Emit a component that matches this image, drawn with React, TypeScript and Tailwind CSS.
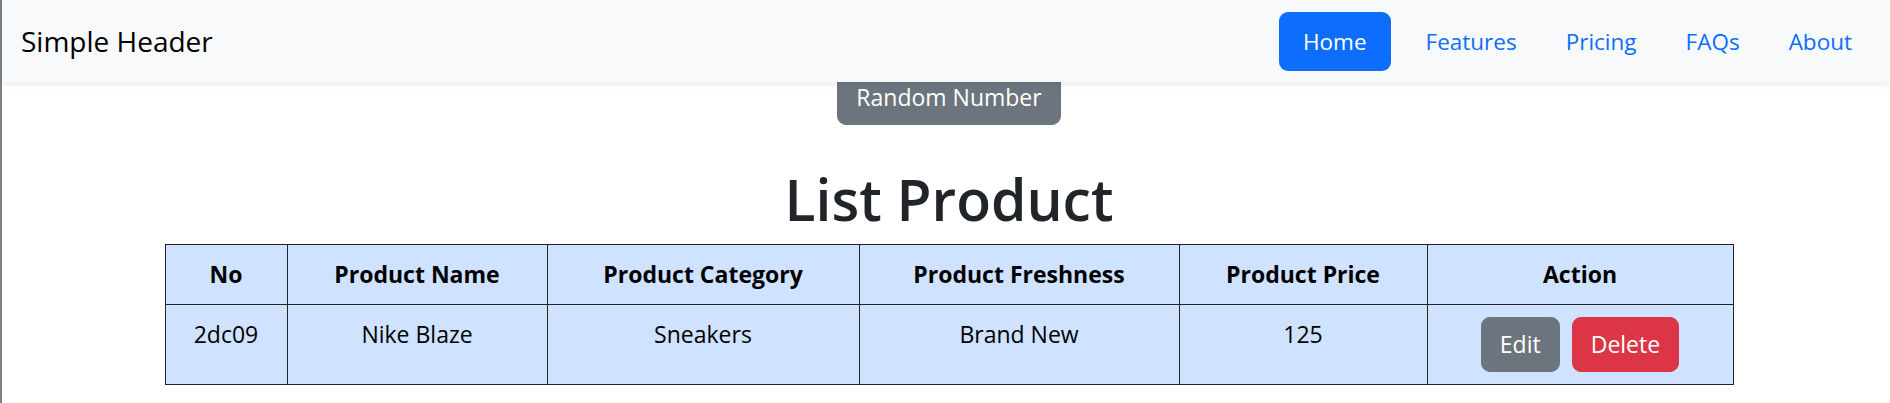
const NAV_LINKS = ['Home', 'Features', 'Pricing', 'FAQs', 'About'];

const COLUMNS = [
  { label: 'No', width: 'w-[122px]' },
  { label: 'Product Name', width: 'w-[260px]' },
  { label: 'Product Category', width: 'w-[312px]' },
  { label: 'Product Freshness', width: 'w-[320px]' },
  { label: 'Product Price', width: 'w-[248px]' },
  { label: 'Action', width: 'w-[306px]' }
];

const PRODUCTS = [
  { id: '2dc09', name: 'Nike Blaze', category: 'Sneakers', freshness: 'Brand New', price: 125 }
];

export default function App() {
  return (
    <div className="min-h-[403px] bg-white border-l-2 border-[#7b8086] font-['Open_Sans','Noto_Sans',sans-serif] text-[#212529]">
      {/* Header */}
      <header className="relative z-10 flex h-[82px] items-center justify-between bg-[#f8f9fa] pl-[19px] pr-[14px] shadow-[0_3px_6px_rgba(0,0,0,0.075)]">
        <span className="text-[28px] leading-[36px] text-black">Simple Header</span>
        <nav className="flex items-center gap-[1px]">
          {NAV_LINKS.map((link, i) => (
            <a
              key={link}
              href="#"
              className={`rounded-[9px] px-[24px] py-[12px] text-[22.5px] leading-[35px] ${
                i === 0 ? 'mr-[10px] bg-[#0d6efd] text-white' : 'text-[#0d6efd]'
              }`}
            >
              {link}
            </a>
          ))}
        </nav>
      </header>

      {/* Content */}
      <main className="flex flex-col items-center pl-[6px]">
        <button className="-mt-[12px] rounded-[9px] border-[1.5px] border-[#6c757d] bg-[#6c757d] px-[18px] py-[9px] text-[23px] leading-[35px] text-white">
          Random Number
        </button>

        <h1 className="mt-[40px] mb-[11px] text-[57px] font-[550] leading-[1.2]">List Product</h1>

        <table className="w-[1569px] table-fixed border-collapse border border-[#212529] bg-[#cfe2ff] text-center text-[23px] leading-[35px] text-black">
          <colgroup>
            {COLUMNS.map(col => (
              <col key={col.label} className={col.width} />
            ))}
          </colgroup>
          <thead>
            <tr>
              {COLUMNS.map(col => (
                <th key={col.label} className="border border-[#212529] px-[12px] py-[12px] align-top font-bold">
                  {col.label}
                </th>
              ))}
            </tr>
          </thead>
          <tbody>
            {PRODUCTS.map(p => (
              <tr key={p.id}>
                <td className="border border-[#212529] px-[12px] py-[12px] align-top">{p.id}</td>
                <td className="border border-[#212529] px-[12px] py-[12px] align-top">{p.name}</td>
                <td className="border border-[#212529] px-[12px] py-[12px] align-top">{p.category}</td>
                <td className="border border-[#212529] px-[12px] py-[12px] align-top">{p.freshness}</td>
                <td className="border border-[#212529] px-[12px] py-[12px] align-top">{p.price}</td>
                <td className="border border-[#212529] px-[12px] py-[12px] align-top">
                  <div className="flex justify-center gap-[12px]">
                    <button className="rounded-[9px] border border-[#6c757d] bg-[#6c757d] px-[18px] py-[9px] text-white">
                      Edit
                    </button>
                    <button className="rounded-[9px] border border-[#dc3545] bg-[#dc3545] px-[18px] py-[9px] text-white">
                      Delete
                    </button>
                  </div>
                </td>
              </tr>
            ))}
          </tbody>
        </table>
      </main>
    </div>
  );
}
